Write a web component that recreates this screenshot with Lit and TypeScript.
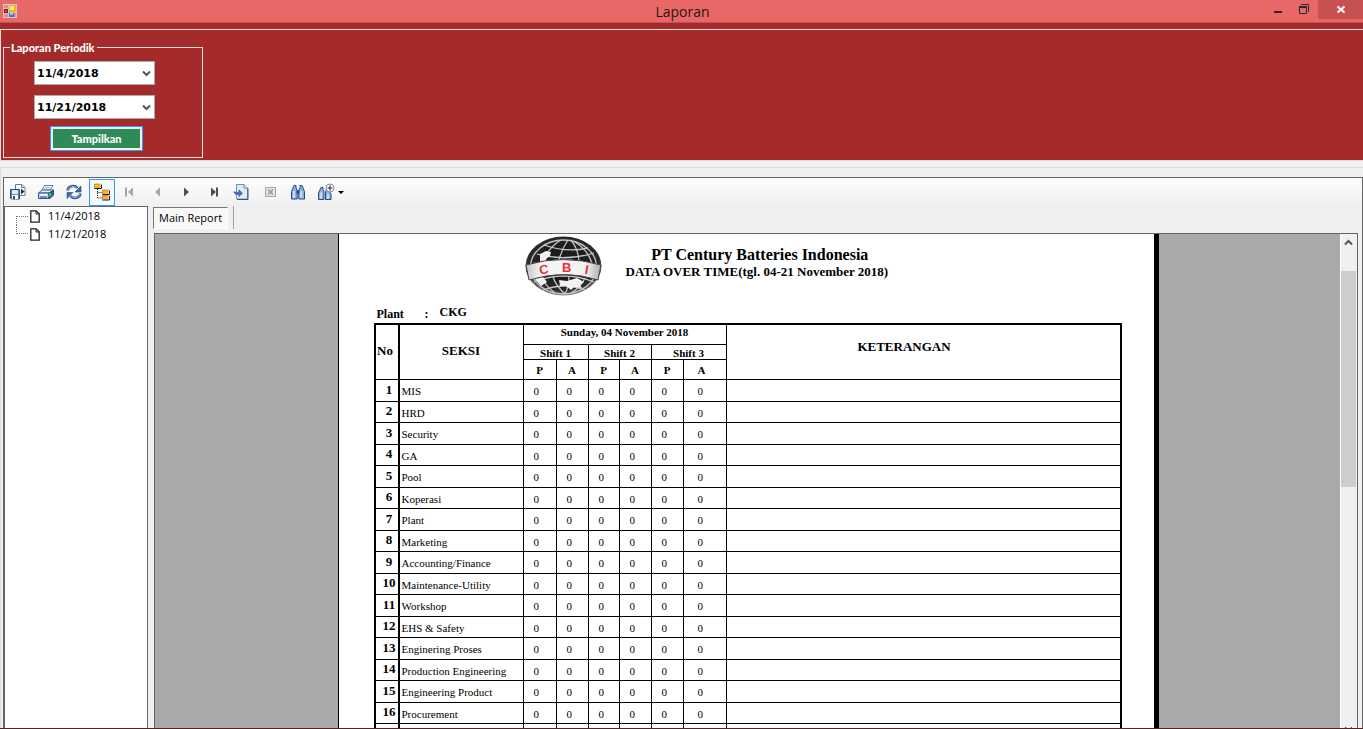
import { LitElement, html, css, svg } from "lit";
import { customElement, property } from "lit/decorators.js";
import { classMap } from "lit/directives/class-map.js";

const SECTIONS = [
  "MIS", "HRD", "Security", "GA", "Pool", "Koperasi", "Plant", "Marketing",
  "Accounting/Finance", "Maintenance-Utility", "Workshop", "EHS & Safety",
  "Enginering Proses", "Production Engineering", "Engineering Product", "Procurement",
];

const COUNTS = [0, 0, 0, 0, 0, 0];

const icons = {
  export: svg`
    <path d="M6.500 1.500h6.500l3 3v8H6.500z" fill="#fff" stroke="#5c7f93"/>
    <path d="M12.500 1.500v3h3" fill="#d5e8f0" stroke="#5c7f93"/>
    <path d="M12 5.500l3.500 3-3.500 3z" fill="#1b2f4c"/>
    <path d="M1.500 6.500h9v9.500H2.500l-1-1z" fill="#5b83b5" stroke="#2b4a75"/>
    <rect x="3" y="7" width="6" height="4" fill="#dfe9f4"/>
    <rect x="3" y="12" width="6" height="4" fill="#fff"/><rect x="4" y="13" width="2" height="3" fill="#2b4a75"/>`,
  print: svg`
    <path d="M5 7l2.500-4.500H16L13 7z" fill="#fff" stroke="#4f7fb8"/>
    <path d="M8 4.500h5.500M7 6h5.500" stroke="#8fb0d2" stroke-width=".8"/>
    <path d="M1.500 10L5 7h11.500L13 10z" fill="#e3ecf6" stroke="#3f6da3"/>
    <path d="M1.500 10H12v5.500H1.500z" fill="#b9d2ec" stroke="#2f5990"/>
    <path d="M12 10l4.500-3v5L13 15.500h-1z" fill="#2f62a5" stroke="#234a80"/>
    <path d="M3 12h7" stroke="#fff" stroke-width="1.500"/><path d="M3 14h7" stroke="#234a80"/>
    <rect x="12" y="10" width="2" height="3" fill="#1fd81f"/><rect x="12" y="13" width="2" height="1" fill="#e03030"/>`,
  refresh: svg`
    <path d="M2.500 7.500C3.500 3 9 1.500 12.500 5" fill="none" stroke="#2b5590" stroke-width="2.600"/>
    <path d="M3 7C4 3.500 9 2.200 12 5.200" fill="none" stroke="#9fc3ea"/>
    <path d="M16 3v6h-6z" fill="#3b6cab" stroke="#23477b" stroke-width=".6"/>
    <path d="M15.500 10.500c-1 4.500-6.500 6-10 2.500" fill="none" stroke="#2b5590" stroke-width="2.600"/>
    <path d="M15 11c-1 3.500-6 4.800-9 1.800" fill="none" stroke="#9fc3ea"/>
    <path d="M2 15.500v-6h6z" fill="#3b6cab" stroke="#23477b" stroke-width=".6"/>`,
  tree: svg`
    <path d="M4.500 6v9H10M4.500 9.500H10" fill="none" stroke="#111" stroke-dasharray="1 1"/>
    <g fill="#f5b233"><rect x="1.500" y="1" width="6" height="4"/><rect x="9.500" y="7" width="6" height="4"/><rect x="9.500" y="12.500" width="6" height="4"/></g>
    <path d="M1.500 5.500h7v-4M9.500 11.500h7v-4M9.500 17h7v-4" fill="none" stroke="#1d1d1d"/>
    <path d="M1.500 5.500V1h6M9.500 11.500V7h6M9.500 16.500v-4h6" fill="none" stroke="#b07a18" stroke-width=".7"/>`,
  first: svg`<path d="M5 4.500v9" stroke="#a5a5a5" stroke-width="2"/><path d="M12 4.500v9L7 9z" fill="#a5a5a5"/>`,
  prev: svg`<path d="M11 4.500v9L6 9z" fill="#a5a5a5"/>`,
  next: svg`<path d="M7 4.500v9l5-4.500z" fill="#4f4f4f"/>`,
  last: svg`<path d="M6 4.500v9L11 9z" fill="#4f4f4f"/><path d="M12 4.500v9" stroke="#4f4f4f" stroke-width="2"/>`,
  goto: svg`
    <path d="M3.500 1.500H11l3.500 3.500v11h-11z" fill="#d9edf7" stroke="#6f94a8"/>
    <path d="M11 1.500V5h3.500" fill="#fff" stroke="#5c8399"/>
    <path d="M15 5.500v11H4" fill="none" stroke="#36596d"/>
    <path d="M1 8.500c1 1.500 3 1 5 .7V7l3.500 3.200L6 13.500v-2.200c-3 .6-5-.3-5-2.800z" fill="#5a6fb5" stroke="#2c3f7d" stroke-width=".6"/>`,
  stop: svg`<rect x="4.500" y="4.500" width="10" height="9" fill="#e4e4e4" stroke="#a7a7a7"/><path d="M7 6.500l5 5M12 6.500l-5 5" stroke="#999" stroke-width="1.600"/>`,
  find: svg`
    <path d="M5 2.500h2v2l1.200 3v8.500H2.500V8.500z" fill="#8fb3e2" stroke="#274a80"/>
    <path d="M13 2.500h-2v2L9.800 7.500v8.500h5.700V8.500z" fill="#8fb3e2" stroke="#274a80"/>
    <path d="M5 8v7M12 8v7" stroke="#dbe8f8" stroke-width="1.400"/>
    <path d="M7.500 7.500h3v3h-3z" fill="#274a80"/>`,
  findZoom: svg`
    <path d="M4 4.500h2v2l1 2.500v7.500H1.500V10z" fill="#8fb3e2" stroke="#274a80"/>
    <path d="M10.500 6H9.500L8.500 9v7.500h5.500V11z" fill="#8fb3e2" stroke="#274a80"/>
    <path d="M4 9.500v6M11 11v5" stroke="#dbe8f8" stroke-width="1.400"/>
    <circle cx="13" cy="5" r="4" fill="#fff" stroke="#8a8a8a"/>
    <path d="M10.500 5h5M13 2.500v5" stroke="#1b2c78" stroke-width="1.200"/>`,
};

const TOOLS: { icon: keyof typeof icons; label: string; active?: boolean; disabled?: boolean }[] = [
  { icon: "export", label: "Export Report" },
  { icon: "print", label: "Print Report" },
  { icon: "refresh", label: "Refresh" },
  { icon: "tree", label: "Toggle Group Tree", active: true },
  { icon: "first", label: "Go to First Page", disabled: true },
  { icon: "prev", label: "Go to Previous Page", disabled: true },
  { icon: "next", label: "Go to Next Page" },
  { icon: "last", label: "Go to Last Page" },
  { icon: "goto", label: "Go to Page" },
  { icon: "stop", label: "Close Current View", disabled: true },
  { icon: "find", label: "Find Text" },
];

@customElement("window-titlebar")
export class WindowTitlebar extends LitElement {
  @property() heading = "";

  static styles = css`
    :host {
      display: grid;
      grid-template-columns: 1fr auto 1fr;
      height: 22px;
      background: #e86868;
      border-bottom: 1px solid #c65050;
      font: 14px/23px "Segoe UI", "Open Sans", sans-serif;
      color: #2b1414;
    }
    .app-icon { margin: 4px 0 0 3px; }
    h1 { margin: 0; padding-left: 2px; font: inherit; }
    .controls { display: flex; justify-content: flex-end; align-items: flex-start; }
    button {
      display: block;
      width: 27px;
      height: 19px;
      padding: 0;
      border: 0;
      background: none;
    }
    .close { width: 45px; background: #c75050; }
    svg { display: block; margin: 0 auto; }
    .app-icon svg { margin: 0; }
  `;

  render() {
    return html`
      <div class="app-icon">
        <svg width="14" height="14" viewBox="0 0 14 14">
          <rect width="14" height="14" fill="#c9c9c9"/>
          <path d="M1 1h4v3H1zM1 10h4v3H1zM11 9h2v4h-2z" fill="#e58b8b"/>
          <rect x="6" y="1" width="7" height="7" fill="#f0b51e"/><rect x="7" y="2" width="4" height="4" fill="#fbe38a"/>
          <rect x="1" y="5" width="4" height="4" fill="#a01010"/><rect x="2" y="6" width="2" height="2" fill="#e04040"/>
          <rect x="6" y="9" width="5" height="4" fill="#3c6fd0"/><rect x="7" y="9" width="3" height="2" fill="#9fc0f5"/>
        </svg>
      </div>
      <h1>${this.heading}</h1>
      <div class="controls">
        <button aria-label="Minimize"><svg width="27" height="19"><rect x="10" y="11" width="8" height="2" fill="#2b2b2b"/></svg></button>
        <button aria-label="Restore">
          <svg width="27" height="19" fill="none" stroke="#2b2b2b"><path d="M10 4.500h7.500V12"/><path d="M8.500 7v6.500h7V7" /><path d="M8 7h8" stroke-width="2"/></svg>
        </button>
        <button class="close" aria-label="Close">
          <svg width="45" height="19"><path d="M19.500 6.500l7 6M26.500 6.500l-7 6" stroke="#fff" stroke-width="2"/></svg>
        </button>
      </div>
    `;
  }
}

@customElement("period-form")
export class PeriodForm extends LitElement {
  static styles = css`
    :host {
      display: block;
      margin-top: 6px;
      padding: 9px 2px 2px;
      border: 1px solid #f0dede;
      border-width: 1px 0 0 1px;
      color: #fff;
      font: 900 11px/17px "Comic Sans MS", Lato, sans-serif;
    }
    fieldset {
      box-sizing: border-box;
      width: 200px;
      margin: 0;
      padding: 5px 0 6px 30px;
      border: 1px solid #f3dcdc;
    }
    legend { margin-left: -24px; padding: 0 2px 0 1px; }
    .fields { display: flex; flex-direction: column; align-items: flex-start; gap: 10px; }
    .picker { display: grid; width: 121px; height: 24px; }
    .picker > * { grid-area: 1 / 1; }
    select {
      appearance: none;
      margin: 0;
      padding: 1px 2px 0;
      border: 1px solid #ababab;
      border-radius: 0;
      background: #fff;
      color: #000;
      font: bold 11px/21px "DejaVu Sans", sans-serif;
    }
    svg { place-self: center end; margin-right: 4px; pointer-events: none; }
    .show {
      box-sizing: border-box;
      width: 93px;
      height: 25px;
      margin: -3px 0 0 16px;
      padding: 0;
      border: 1px solid #3399ff;
      box-shadow: inset 0 0 0 2px #f0f0f0;
      background: #2e8b57;
      color: #fff;
      font: inherit;
    }
  `;

  private picker(label: string, value: string) {
    return html`
      <div class="picker">
        <select aria-label=${label}><option>${value}</option></select>
        <svg width="9" height="7" viewBox="0 0 9 7"><path d="M1 1.500l3.500 3.500L8 1.500" fill="none" stroke="#555" stroke-width="2"/></svg>
      </div>
    `;
  }

  render() {
    return html`
      <fieldset>
        <legend>Laporan Periodik</legend>
        <div class="fields">
          ${this.picker("Dari tanggal", "11/4/2018")}
          ${this.picker("Sampai tanggal", "11/21/2018")}
          <button class="show">Tampilkan</button>
        </div>
      </fieldset>
    `;
  }
}

@customElement("viewer-toolbar")
export class ViewerToolbar extends LitElement {
  static styles = css`
    :host {
      display: flex;
      gap: 2px;
      height: 28px;
      padding-left: 1px;
      background: linear-gradient(#fdfdfd, #f0f0f0);
    }
    button {
      box-sizing: border-box;
      display: flex;
      align-items: center;
      justify-content: center;
      width: 26px;
      height: 27px;
      margin-top: 1px;
      padding: 0;
      border: 1px solid transparent;
      background: none;
    }
    .active { border-color: #3399ff; background: #f6f9fd; }
    .split { width: 34px; gap: 3px; }
    svg { display: block; flex: none; overflow: visible; }
  `;

  render() {
    return html`
      ${TOOLS.map((t) => html`
        <button class=${classMap({ active: !!t.active })} aria-label=${t.label} ?disabled=${t.disabled}>
          <svg width="18" height="17" viewBox="0 1 18 17">${icons[t.icon]}</svg>
        </button>`)}
      <button class="split" aria-label="Zoom">
        <svg width="18" height="17" viewBox="0 1 18 17">${icons.findZoom}</svg>
        <svg width="6" height="3"><path d="M0 0h6L3 3z"/></svg>
      </button>
    `;
  }
}

@customElement("group-tree")
export class GroupTree extends LitElement {
  static styles = css`
    :host {
      display: block;
      width: 142px;
      border: 1px solid #646464;
      border-bottom: 0;
      background: #fff;
      font: 11px/18px "Segoe UI", "Open Sans", sans-serif;
    }
    ul { margin: 0; padding: 0 0 0 11px; list-style: none; }
    li { display: flex; align-items: center; height: 18px; }
    li::before { content: ""; box-sizing: border-box; width: 12px; height: 9px; border-left: 1px dotted #777; }
    li:first-child::before { align-self: flex-end; border-top: 1px dotted #777; }
    li:last-child::before { align-self: flex-start; border-bottom: 1px dotted #777; }
    svg { margin: 0 8px 0 2px; }
    a { color: #000; text-decoration: none; }
  `;

  render() {
    return html`
      <ul>
        ${["11/4/2018", "11/21/2018"].map((d) => html`
          <li>
            <svg width="10" height="13" viewBox="0 0 10 13"><path d="M.8.800h5.400l3 3v8.400H.8z" fill="#fff" stroke="#222" stroke-width="1.300"/><path d="M6 1v3h3" fill="none" stroke="#222"/></svg>
            <a href="#">${d}</a>
          </li>`)}
      </ul>
    `;
  }
}

@customElement("report-page")
export class ReportPage extends LitElement {
  static styles = css`
    :host {
      display: block;
      box-sizing: border-box;
      width: 821px;
      min-height: 1056px;
      padding: 0 32px 40px 35px;
      border-left: 1px solid #000;
      border-right: 5px solid #000;
      background: #fff;
      color: #000;
      font: 11px/14px "Times New Roman", "Liberation Serif", serif;
    }
    header { display: flex; padding: 2px 0 0 151px; gap: 24px; }
    .headings { padding-top: 10px; text-align: center; font-weight: bold; }
    h2 { margin: 0; padding-left: 6px; font-size: 16px; line-height: 18px; }
    .headings p { margin: 0; font-size: 13px; line-height: 16px; }
    .plant { display: flex; height: 19px; padding-left: 3px; font-weight: bold; font-size: 12px; line-height: 16px; margin: 8px 0 0; }
    .plant dt { width: 48px; padding-top: 2px; }
    .plant dd { margin: 0; }
    .plant .colon { width: 15px; padding-top: 2px; }
    table {
      width: 100%;
      table-layout: fixed;
      border-collapse: separate;
      border-spacing: 0;
      border: solid #000;
      border-width: 2px 2px 0;
    }
    .c-no { width: 22px; }
    .c-name { width: 125px; }
    .c-33 { width: 33px; }
    .c-32 { width: 32px; }
    .c-31 { width: 31px; }
    .c-43 { width: 43px; }
    th, td {
      box-sizing: border-box;
      padding: 0;
      border-left: 1px solid #000;
      border-bottom: 1px solid #000;
      white-space: nowrap;
    }
    th { font-size: 11px; line-height: 12px; }
    .no { border-left: 0; }
    .name { border-left-width: 2px; }
    .r20 { height: 20px; }
    .r15 { height: 15px; }
    .r15 th { padding-top: 2px; }
    .r20 th:last-child:not(.note-head) { padding-right: 6px; }
    thead .big { font-size: 13px; line-height: 16px; }
    thead .name { padding-bottom: 3px; }
    thead .no { padding: 0 3px 2px 0; }
    .day { padding-bottom: 6px; }
    .note-head { padding: 0 38px 10px 0; }
    tbody tr { height: 21px; }
    tbody tr:nth-child(odd) { height: 22px; }
    tbody th { padding: 0 0 2px 5px; font-size: 13px; }
    tbody .name { padding: 1px 0 0 2px; }
    .count { padding: 1px 0 0 10px; line-height: 12px; }
    .count.wide { padding-left: 14px; }
  `;

  private logo() {
    return html`
      <svg width="77" height="60" viewBox="0 0 77 60" role="img" aria-label="CBI">
        <defs>
          <radialGradient id="globe" cx=".5" cy=".45" r=".55"><stop offset=".5" stop-color="#1c1c1c"/><stop offset=".85" stop-color="#2a2a2a"/><stop offset="1" stop-color="#888"/></radialGradient>
          <linearGradient id="band" x2="1"><stop stop-color="#c4c4c4"/><stop offset=".2" stop-color="#f6f6f6"/><stop offset=".8" stop-color="#f2f2f2"/><stop offset="1" stop-color="#aaa"/></linearGradient>
        </defs>
        <ellipse cx="38.500" cy="30" rx="38" ry="29.500" fill="url(#globe)"/>
        <g fill="none" stroke="#c6c6c6" stroke-width="1.300">
          <ellipse cx="38.500" cy="31" rx="33" ry="27"/>
          <path d="M19 9q23 8 44 3M12 18q27 8 57-1M9 46q30-12 60 0M18 54q22-8 42 0"/>
          <path d="M36 4Q22 12 16 30M43 4q-7 10-10 24M46 4q8 10 8 24M50 6q14 9 17 22M16 42q6 9 14 15M28 41q3 9 12 17M44 41q0 9-4 17M60 42q-4 9-14 15"/>
        </g>
        <path d="M15 18l6-3 5 1-1 4-4 3 2 5-8 1zM34 44l8 1 10-3 7 4-4 3 2 3-8-1-3 3-5-4-6 0zM9 42l9-1 4 5-6 4z" fill="#f2f2f2"/>
        <path d="M1 29q37-11 75 0l-3 15q-34-11-69 0z" fill="url(#band)" stroke="#444"/>
        <g fill="#ee2f3a" font-family="Liberation Sans, sans-serif" font-weight="bold" font-size="13">
          <text x="14" y="38" transform="rotate(-7 18 33)">C</text>
          <text x="37" y="36">B</text>
          <text x="60" y="38" transform="rotate(10 61 33)">I</text>
        </g>
      </svg>
    `;
  }

  private counts(values: (number | string)[]) {
    return values.map((v, i) => html`<td class=${classMap({ count: true, wide: i === 5 })}>${v}</td>`);
  }

  render() {
    return html`
      <header>
        ${this.logo()}
        <div class="headings">
          <h2>PT Century Batteries Indonesia</h2>
          <p>DATA OVER TIME(tgl. 04-21 November 2018)</p>
        </div>
      </header>
      <dl class="plant"><dt>Plant</dt><dd class="colon">:</dd><dd>CKG</dd></dl>
      <table>
        <colgroup>
          <col class="c-no"><col class="c-name"><col class="c-33"><col class="c-32"><col class="c-31">
          <col class="c-32"><col class="c-32"><col class="c-43"><col>
        </colgroup>
        <thead>
          <tr class="r20">
            <th class="no big" rowspan="3">No</th>
            <th class="name big" rowspan="3">SEKSI</th>
            <th class="day" colspan="6">Sunday, 04 November 2018</th>
            <th class="note-head big" rowspan="3">KETERANGAN</th>
          </tr>
          <tr class="r15">${[1, 2, 3].map((n) => html`<th colspan="2">Shift ${n}</th>`)}</tr>
          <tr class="r20">${["P", "A", "P", "A", "P", "A"].map((s) => html`<th>${s}</th>`)}</tr>
        </thead>
        <tbody>
          ${SECTIONS.map((name, i) => html`
            <tr>
              <th class="no" scope="row">${i + 1}</th>
              <td class="name">${name}</td>
              ${this.counts(COUNTS)}
              <td></td>
            </tr>`)}
          <tr>
            <th class="no" scope="row"></th><td class="name"></td>${this.counts(["", "", "", "", "", ""])}<td></td>
          </tr>
        </tbody>
      </table>
    `;
  }
}

@customElement("app-root")
export class AppRoot extends LitElement {
  static styles = css`
    :host {
      display: flex;
      flex-direction: column;
      box-sizing: border-box;
      height: 100vh;
      overflow: hidden;
      background: #f0f0f0;
      border-bottom: 1px solid #5a2222;
    }
    .filter { flex: none; background: #a52a2a; display: flow-root; }
    .client {
      flex: 1;
      min-height: 0;
      display: flex;
      flex-direction: column;
      border-top: 1px solid #dcdcdc;
    }
    .frame {
      flex: 1;
      min-height: 0;
      display: flex;
      margin-top: 6px;
      padding: 9px 0 0 2px;
      border: 1px solid #dcdcdc;
      border-width: 1px 0 0 1px;
    }
    .viewer {
      flex: 1;
      min-width: 0;
      display: flex;
      flex-direction: column;
      border: 1px solid #646464;
      border-bottom: 0;
    }
    viewer-toolbar { flex: none; }
    .body { flex: 1; min-height: 0; display: flex; gap: 5px; padding-right: 4px; }
    .main { flex: 1; min-width: 0; display: flex; flex-direction: column; }
    .tabs { flex: none; display: flex; height: 27px; }
    .tab {
      box-sizing: border-box;
      height: 22px;
      margin: 1px 5px 0 0;
      padding: 0 5px;
      border: 1px solid #777;
      border-right-color: #fff;
      border-bottom-color: #fff;
      background: #f8f8f8;
      color: #000;
      font: 11px/18px "Segoe UI", "Open Sans", sans-serif;
    }
    .divider { width: 1px; height: 23px; background: #a0a0a0; }
    .viewport {
      flex: 1;
      min-height: 0;
      display: flex;
      margin-left: 1px;
      border: 1px solid #646464;
      border-bottom: 0;
      background: #a9a9a9;
      overflow: hidden;
    }
    .canvas { flex: 1; min-width: 0; display: flex; justify-content: center; align-items: flex-start; padding-left: 1px; }
    report-page { flex: none; }
    .scrollbar {
      display: flex;
      flex-direction: column;
      box-sizing: border-box;
      width: 17px;
      margin-bottom: -10px;
      padding-right: 1px;
      border-left: 1px solid #fff;
      background: #f0f0f0;
    }
    .arrow { height: 17px; flex: none; padding: 0; border: 0; background: none; display: grid; place-items: center; }
    .track { flex: 1; padding-top: 20px; }
    .thumb { height: 48%; background: #cdcdcd; }
  `;

  render() {
    return html`
      <window-titlebar heading="Laporan"></window-titlebar>
      <div class="filter"><period-form></period-form></div>
      <div class="client">
        <div class="frame">
          <div class="viewer">
            <viewer-toolbar></viewer-toolbar>
            <div class="body">
              <group-tree></group-tree>
              <div class="main">
                <div class="tabs"><button class="tab">Main Report</button><span class="divider"></span></div>
                <div class="viewport">
                  <div class="canvas"><report-page></report-page></div>
                  <div class="scrollbar">
                    <button class="arrow" aria-label="Scroll up"><svg width="9" height="7"><path d="M1 5.500L4.500 2 8 5.500" fill="none" stroke="#555" stroke-width="2"/></svg></button>
                    <div class="track"><div class="thumb"></div></div>
                    <button class="arrow" aria-label="Scroll down"><svg width="9" height="7"><path d="M1 1.500L4.500 5 8 1.500" fill="none" stroke="#555" stroke-width="2"/></svg></button>
                  </div>
                </div>
              </div>
            </div>
          </div>
        </div>
      </div>
    `;
  }
}
